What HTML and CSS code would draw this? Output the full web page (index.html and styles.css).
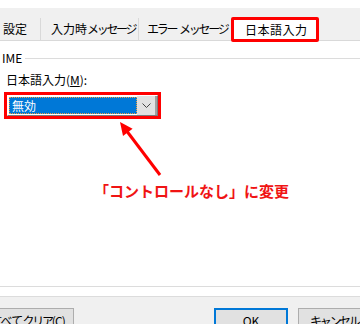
FILE: index.html
```html
<!DOCTYPE html>
<html lang="ja">
<head>
    <meta charset="UTF-8">
    <title>データの入力規則</title>
    <link rel="stylesheet" href="styles.css">
</head>
<body>
    <div class="top-strip"></div>

    <div class="tabs">
        <div class="tab tab-first">設定</div>
        <div class="tab tab-msg">入力時<span class="kana">メッセージ</span></div>
        <div class="tab tab-err"><span class="kana word">エラー</span><span class="kana">メッセージ</span></div>
        <div class="tab tab-active">日本語入力</div>
    </div>

    <div class="panel">
        <div class="group">
            <div class="group-head"><span>IME</span></div>
            <div class="field-label">日本語入力(<u>M</u>):</div>
            <div class="combo-mark">
                <div class="combo">
                    <div class="combo-value"><span>無効</span></div>
                    <div class="combo-btn">
                        <svg width="9" height="5" viewBox="0 0 9 5"><path d="M0.5 0.5 L4.5 4.5 L8.5 0.5" fill="none" stroke="#444" stroke-width="1"/></svg>
                    </div>
                </div>
            </div>
        </div>

        <!-- annotation -->
        <svg class="arrow" width="360" height="200" viewBox="0 0 360 200">
            <line x1="160" y1="134" x2="126" y2="89" stroke="#ff0000" stroke-width="3"/>
            <polygon points="120,81 132.6,87.8 123,95" fill="#ff0000"/>
        </svg>
        <div class="note">「コントロールなし」に変更</div>
    </div>

    <div class="footer">
        <button class="btn btn-clear">すべて<span class="kana">クリア</span>(C)</button>
        <button class="btn btn-ok">OK</button>
        <button class="btn btn-cancel"><span class="kana">キャンセル</span></button>
    </div>
</body>
</html>
```

FILE: styles.css
```css
body {
    margin: 0;
    width: 360px;
    height: 324px;
    overflow: hidden;
    background-color: #f0f0f0;
    font-family: "Noto Sans CJK JP", "Noto Sans", sans-serif;
    font-size: 12px;
    color: #000;
}

.kana {
    letter-spacing: -2.3px;
}

.kana.word {
    margin-right: 3px;
}

.top-strip {
    height: 8px;
    background: #fff;
}

.tabs {
    display: flex;
    height: 22px;
    margin-top: 10px;
    position: relative;
    z-index: 2;
}

.tab {
    box-sizing: border-box;
    flex-shrink: 0;
    height: 22px;
    line-height: 22px;
    border-right: 1px solid #d9d9d9;
    background: #f0f0f0;
    white-space: nowrap;
}

.tab-first {
    width: 41px;
    padding-left: 3px;
}

.tab-msg {
    width: 98px;
    padding-left: 10px;
}

.tab-err {
    width: 92px;
    padding-left: 8px;
    border-right: none;
    overflow: hidden;
}

.tab-active {
    box-sizing: border-box;
    width: 88px;
    height: 25px;
    margin-top: -1px;
    line-height: 19px;
    padding-left: 11px;
    background: #fff;
    border: 3px solid #ff0000;
    border-radius: 2px;
    letter-spacing: 0.5px;
}

.panel {
    position: relative;
    height: 255px;
    background: #fff;
    border-top: 1px solid #d9d9d9;
    border-bottom: 1px solid #dcdcdc;
}

.group {
    margin-top: 10px;
    height: 235px;
    border-bottom: 1px solid #dcdcdc;
}

.group-head {
    display: flex;
    align-items: center;
    height: 14px;
    line-height: 14px;
}

.group-head span {
    padding-left: 2px;
    margin-right: 3px;
}

.group-head::after {
    content: "";
    flex: 1;
    height: 1px;
    background: #dcdcdc;
}

.field-label {
    margin-top: 8px;
    padding-left: 6px;
    line-height: 14px;
}

.combo-mark {
    box-sizing: border-box;
    width: 157px;
    height: 27px;
    margin: 5px 0 0 4px;
    border: 3px solid #ff0000;
}

.combo {
    display: flex;
    height: 21px;
    border: 1px solid #7a7a7a;
    border-top-color: #fff;
    border-left-color: #fff;
    box-sizing: border-box;
    background: #fff;
}

.combo-value {
    flex: 1;
    padding: 1px 0 1px 1px;
}

.combo-value span {
    display: block;
    box-sizing: border-box;
    height: 17px;
    line-height: 15px;
    padding-left: 2px;
    background: #0078d7;
    color: #fff;
    border: 1px dotted #f0a040;
}

.combo-btn {
    display: flex;
    align-items: center;
    justify-content: center;
    width: 18px;
    background: #e1e1e1;
    border-right: 2px solid #a0a0a0;
}

.arrow {
    position: absolute;
    left: 0;
    top: 0;
}

.note {
    position: absolute;
    left: 94px;
    top: 140px;
    font-size: 15px;
    font-weight: bold;
    line-height: 20px;
    color: #f01414;
    white-space: nowrap;
}

.footer {
    display: flex;
    padding-top: 11px;
}

.btn {
    box-sizing: border-box;
    flex-shrink: 0;
    height: 24px;
    padding: 0;
    font-family: inherit;
    font-size: 12px;
    line-height: 17px;
    background: #e1e1e1;
    border: 1px solid #adadad;
    text-align: center;
    white-space: nowrap;
}

.btn-clear {
    width: 95px;
    margin-left: -21px;
    text-align: right;
    padding-right: 8px;
    letter-spacing: -0.8px;
}

.btn-ok {
    width: 74px;
    margin-left: 140px;
    border: 2px solid #0078d7;
}

.btn-cancel {
    width: 74px;
    margin-left: 10px;
    text-align: left;
    padding-left: 11px;
}
```
